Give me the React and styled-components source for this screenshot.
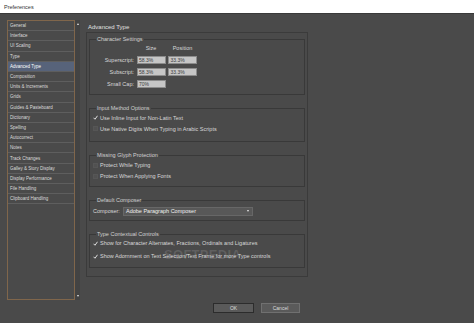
import React from 'react';
import styled, { createGlobalStyle } from 'styled-components';

const Global = createGlobalStyle`
  html, body { margin: 0; padding: 0; background: #4a4a4a; }
  body { font-family: "Liberation Sans", Arial, sans-serif; }
  #root { width: 474px; height: 323px; overflow: hidden; }
`;

const Window = styled.div`
  position: relative;
  width: 474px;
  height: 323px;
  display: flex;
  flex-direction: column;
  background: #4a4a4a;
  color: #d8d8d8;
  overflow: hidden;
`;

const TitleBar = styled.div`
  height: 14px;
  flex: none;
  box-sizing: border-box;
  background: #ffffff;
  border-bottom: 1px solid #3a3a3a;
  display: flex;
  align-items: center;
  padding-left: 4px;
  font-size: 5.5px;
  color: #333;
`;

const Body = styled.div`
  display: flex;
  height: 286px;
  box-sizing: border-box;
  padding: 6px 0 0 7px;
`;

const Sidebar = styled.div`
  display: flex;
  height: 280px;
`;

const ListBox = styled.div`
  width: 68px;
  height: 280px;
  box-sizing: border-box;
  border: 1px solid #80664b;
  display: flex;
  flex-direction: column;
`;

const ListItem = styled.div`
  height: 10.2px;
  flex: none;
  box-sizing: border-box;
  border-bottom: 1px solid #5e5e5e;
  padding-left: 2px;
  display: flex;
  align-items: center;
  font-size: 4.5px;
  white-space: nowrap;
  color: ${p => (p.$active ? '#ffffff' : '#dcdcdc')};
  background: ${p => (p.$active ? '#57637a' : 'transparent')};
`;

const ScrollBar = styled.div`
  width: 5px;
  height: 280px;
  box-sizing: border-box;
  background: #434343;
  display: flex;
  flex-direction: column;
  justify-content: space-between;
  align-items: center;
  padding: 3px 0 3px;
`;

const Arrow = styled.div`
  width: 0;
  height: 0;
  border-left: 1.5px solid transparent;
  border-right: 1.5px solid transparent;
  ${p => (p.$down ? 'border-top: 2px solid #e8e8e8;' : 'border-bottom: 2px solid #e8e8e8;')}
`;

const Main = styled.div`
  margin-left: 6px;
  width: 222px;
  display: flex;
  flex-direction: column;
`;

const Heading = styled.div`
  margin-top: 3px;
  padding-left: 2px;
  height: 8px;
  line-height: 8px;
  font-size: 6px;
  color: #e0e0e0;
`;

const Frame = styled.div`
  margin-top: 1px;
  box-sizing: border-box;
  border: 1px solid #3b3b3b;
  padding: 2.5px 2px 8px 2px;
  display: flex;
  flex-direction: column;
  gap: 10px;
`;

const Group = styled.fieldset`
  margin: 0;
  min-width: 0;
  border: 1px solid #393939;
  padding: ${p => p.$pad || '2px 0 6px 3px'};
  display: flex;
  flex-direction: column;
  gap: ${p => p.$gap || '3px'};
`;

const Legend = styled.legend`
  margin-left: 3px;
  padding: 0 1px;
  font-size: 5.5px;
  line-height: 7px;
  color: #d0d0d0;
`;

const CharGrid = styled.div`
  display: grid;
  grid-template-columns: 44px 29px 29px;
  column-gap: 2.5px;
  row-gap: 4px;
  align-items: center;
  margin-left: -3px;
`;

const ColHead = styled.div`
  height: 7px;
  line-height: 7px;
  font-size: 5.5px;
  text-align: center;
  color: #d8d8d8;
`;

const RowLabel = styled.div`
  text-align: right;
  font-size: 5.5px;
  color: #d8d8d8;
  white-space: nowrap;
`;

const Field = styled.div`
  height: 8px;
  box-sizing: border-box;
  background: #c6c6c6;
  border: 1px solid #8c8c8c;
  font-size: 5px;
  line-height: 6px;
  padding-left: 1.5px;
  color: #3a3a3a;
`;

const CheckRow = styled.div`
  display: flex;
  align-items: center;
  gap: 2px;
  height: 8px;
  font-size: 5.5px;
  white-space: nowrap;
  color: #d8d8d8;
`;

const Box = styled.span`
  width: 5px;
  height: 5px;
  flex: none;
  box-sizing: border-box;
  background: ${p => (p.$checked ? 'transparent' : '#515151')};
  border: ${p => (p.$checked ? 'none' : '1px solid #565656')};
  display: flex;
  align-items: center;
  justify-content: center;
`;

const ComposerRow = styled.div`
  display: flex;
  align-items: center;
  height: 9px;
  font-size: 5.5px;
  color: #d8d8d8;
`;

const ComposerLabel = styled.span`
  width: 30px;
  flex: none;
`;

const Select = styled.div`
  width: 130px;
  height: 9px;
  box-sizing: border-box;
  background: #585858;
  border: 1px solid #676767;
  display: flex;
  align-items: center;
  justify-content: space-between;
  padding: 0 3px 0 2px;
  color: #f0f0f0;
  font-size: 5.5px;
`;

const Footer = styled.div`
  display: flex;
  gap: 7px;
  margin-top: 3px;
  padding-left: 213px;
`;

const Button = styled.div`
  width: ${p => p.$w}px;
  height: 10px;
  box-sizing: border-box;
  background: #5a5a5a;
  border: 1px solid ${p => (p.$default ? '#2c2c2c' : '#707070')};
  display: flex;
  align-items: center;
  justify-content: center;
  font-size: 5px;
  color: #dcdcdc;
`;

const Watermark = styled.div`
  position: absolute;
  left: 164px;
  top: 247px;
  font-size: 13px;
  font-weight: bold;
  color: rgba(255, 255, 255, 0.13);
  letter-spacing: 0.3px;
  pointer-events: none;
`;

const Check = () => (
  <svg width="5" height="5" viewBox="0 0 10 10">
    <path d="M1 5.5 L4 8.5 L9 1.5" fill="none" stroke="#eeeeee" strokeWidth="1.8" />
  </svg>
);

const CheckItem = ({ checked, children }) => (
  <CheckRow>
    <Box $checked={checked}>{checked && <Check />}</Box>
    <span>{children}</span>
  </CheckRow>
);

const items = [
  'General', 'Interface', 'UI Scaling', 'Type', 'Advanced Type', 'Composition',
  'Units & Increments', 'Grids', 'Guides & Pasteboard', 'Dictionary', 'Spelling',
  'Autocorrect', 'Notes', 'Track Changes', 'Galley & Story Display',
  'Display Performance', 'File Handling', 'Clipboard Handling',
];

export default function App() {
  return (
    <>
      <Global />
      <Window>
        <TitleBar>Preferences</TitleBar>
        <Body>
          <Sidebar>
            <ListBox>
              {items.map(it => (
                <ListItem key={it} $active={it === 'Advanced Type'}>{it}</ListItem>
              ))}
            </ListBox>
            <ScrollBar>
              <Arrow />
              <Arrow $down />
            </ScrollBar>
          </Sidebar>
          <Main>
            <Heading>Advanced Type</Heading>
            <Frame>
              <Group $pad="2px 0 6px 3px">
                <Legend>Character Settings</Legend>
                <CharGrid>
                  <span />
                  <ColHead>Size</ColHead>
                  <ColHead>Position</ColHead>
                  <RowLabel>Superscript:</RowLabel>
                  <Field>58.3%</Field>
                  <Field>33.3%</Field>
                  <RowLabel>Subscript:</RowLabel>
                  <Field>58.3%</Field>
                  <Field>33.3%</Field>
                  <RowLabel>Small Cap:</RowLabel>
                  <Field>70%</Field>
                  <span />
                </CharGrid>
              </Group>
              <Group $pad="2px 0 8px 3px" $gap="3px">
                <Legend>Input Method Options</Legend>
                <CheckItem checked>Use Inline Input for Non-Latin Text</CheckItem>
                <CheckItem>Use Native Digits When Typing in Arabic Scripts</CheckItem>
              </Group>
              <Group $pad="2.5px 0 6px 3px" $gap="3px">
                <Legend>Missing Glyph Protection</Legend>
                <CheckItem>Protect While Typing</CheckItem>
                <CheckItem>Protect When Applying Fonts</CheckItem>
              </Group>
              <Group $pad="2.5px 0 4px 3px">
                <Legend>Default Composer</Legend>
                <ComposerRow>
                  <ComposerLabel>Composer:</ComposerLabel>
                  <Select>
                    <span>Adobe Paragraph Composer</span>
                    <Arrow $down />
                  </Select>
                </ComposerRow>
              </Group>
              <Group $pad="1.5px 0 7px 3px" $gap="5px">
                <Legend>Type Contextual Controls</Legend>
                <CheckItem checked>Show for Character Alternates, Fractions, Ordinals and Ligatures</CheckItem>
                <CheckItem checked>Show Adornment on Text Selection/Text Frame for more Type controls</CheckItem>
              </Group>
            </Frame>
          </Main>
        </Body>
        <Footer>
          <Button $w={41} $default>OK</Button>
          <Button $w={39}>Cancel</Button>
        </Footer>
        <Watermark>SOFTPEDIA</Watermark>
      </Window>
    </>
  );
}
